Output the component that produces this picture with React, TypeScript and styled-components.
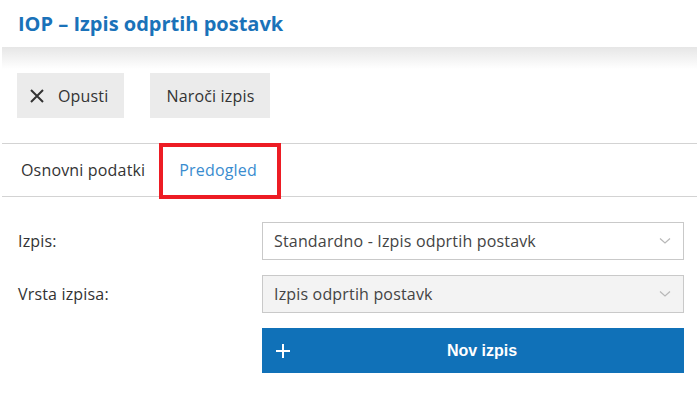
import * as React from 'react'
import styled, { createGlobalStyle } from 'styled-components'

const GlobalStyle = createGlobalStyle`
    body {
        margin: 0;
        background: #fff;
        font-family: "Open Sans", "Liberation Sans", sans-serif;
        color: #333;
    }
`

const Header = styled.header`
    height: 47px;
    display: flex;
    align-items: center;
    padding-left: 18px;
`

const Title = styled.h1`
    margin: 0;
    font-size: 20px;
    font-weight: 700;
    color: #1a72b9;
`

const Panel = styled.div`
    margin-left: 2px;
`

const Shade = styled.div`
    height: 22px;
    background: linear-gradient(#e6e6e6, #ffffff);
`

const Toolbar = styled.div`
    display: flex;
    gap: 26px;
    padding: 4px 0 25px 15px;
`

const ToolButton = styled.button`
    display: flex;
    align-items: center;
    gap: 13px;
    height: 45px;
    padding: 0 16px 0 ${p => (p.$icon ? 12 : 16)}px;
    border: none;
    background: #ebebeb;
    font-family: "Open Sans", sans-serif;
    font-size: 16px;
    letter-spacing: 0.17px;
    color: #333;
`

const Tabs = styled.nav`
    display: flex;
    height: 52px;
    border-top: 1px solid #d3d3d3;
    border-bottom: 1px solid #d3d3d3;
`

const Tab = styled.div`
    position: relative;
    display: flex;
    align-items: center;
    padding: 0 ${p => (p.$active ? '24px 0 20px' : '14px 0 19px')};
    font-size: 16px;
    letter-spacing: 0.17px;
    color: ${p => (p.$active ? '#3a8ccf' : '#333')};

    ${p => p.$active && `
        &::after {
            content: '';
            position: absolute;
            top: -1px;
            left: 0;
            right: 0;
            bottom: -3px;
            border: 4px solid #ed1c24;
        }
    `}
`

const Form = styled.div`
    display: grid;
    grid-template-columns: 244px 422px;
    row-gap: 15px;
    align-items: center;
    padding: 25px 0 0 16px;
`

const Label = styled.label`
    font-size: 16px;
    letter-spacing: 0.17px;
    color: #333;
`

const Select = styled.div`
    display: flex;
    align-items: center;
    justify-content: space-between;
    height: 38px;
    box-sizing: border-box;
    padding: 0 12px 0 11px;
    border: 1px solid #c9c9c9;
    background: ${p => (p.$disabled ? '#f3f3f3' : '#fff')};
    font-size: 16px;
    letter-spacing: 0.17px;
    color: #444;
`

const SubmitButton = styled.button`
    grid-column: 2;
    position: relative;
    display: flex;
    align-items: center;
    justify-content: center;
    height: 45px;
    padding-left: 24px;
    border: none;
    background: #1071b8;
    color: #fff;
    font-family: "Liberation Sans", Arial, sans-serif;
    font-size: 16px;
    font-weight: 700;

    svg {
        position: absolute;
        left: 13px;
        top: 15px;
    }
`

const Chevron = () => (
    <svg width="12" height="8" viewBox="0 0 12 8">
        <path d="M1 1.5 L6 6 L11 1.5" fill="none" stroke="#b8b8b8" strokeWidth="1.2" />
    </svg>
)

export default function App() {
    return (
        <>
            <GlobalStyle />
            <Header>
                <Title>IOP – Izpis odprtih postavk</Title>
            </Header>
            <Panel>
                <Shade />
                <Toolbar>
                    <ToolButton $icon>
                        <svg width="16" height="16" viewBox="0 0 16 16">
                            <path d="M2 2 L14 14 M14 2 L2 14" stroke="#333" strokeWidth="2" />
                        </svg>
                        Opusti
                    </ToolButton>
                    <ToolButton>Naroči izpis</ToolButton>
                </Toolbar>
                <Tabs>
                    <Tab>Osnovni podatki</Tab>
                    <Tab $active>Predogled</Tab>
                </Tabs>
                <Form>
                    <Label>Izpis:</Label>
                    <Select>
                        Standardno - Izpis odprtih postavk
                        <Chevron />
                    </Select>
                    <Label>Vrsta izpisa:</Label>
                    <Select $disabled>
                        Izpis odprtih postavk
                        <Chevron />
                    </Select>
                    <SubmitButton>
                        <svg width="16" height="16" viewBox="0 0 16 16">
                            <path d="M8 1 V15 M1 8 H15" stroke="#fff" strokeWidth="2" />
                        </svg>
                        Nov izpis
                    </SubmitButton>
                </Form>
            </Panel>
        </>
    )
}
